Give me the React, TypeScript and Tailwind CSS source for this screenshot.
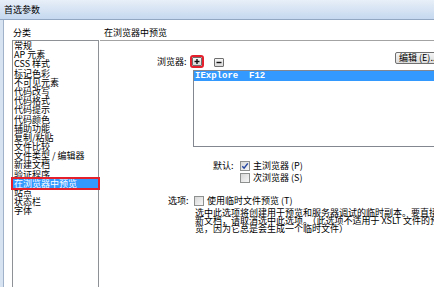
import React from "react";

const CATEGORIES = [
  "常规",
  "AP 元素",
  "CSS 样式",
  "标记色彩",
  "不可见元素",
  "代码改写",
  "代码格式",
  "代码提示",
  "代码颜色",
  "辅助功能",
  "复制/粘贴",
  "文件比较",
  "文件类型 / 编辑器",
  "新建文档",
  "验证程序",
  "在浏览器中预览",
  "站点",
  "状态栏",
  "字体"
];

const SELECTED = "在浏览器中预览";

function CheckBox({ checked }: { checked?: boolean }) {
  return (
    <span className="flex h-[10px] w-[10px] shrink-0 items-center justify-center border border-[#8e8f8f] bg-gradient-to-br from-[#d8d8d8] to-[#f7f7f7]">
      {checked && (
        <svg viewBox="0 0 8 8" className="h-[8px] w-[8px]">
          <path d="M1.3 4.3 L3.1 6.2 L6.8 1.4" stroke="#2446a0" strokeWidth="1.5" fill="none" />
        </svg>
      )}
    </span>
  );
}

function SmallButton({ sign, className }: { sign: "plus" | "minus"; className?: string }) {
  return (
    <span
      className={`flex h-[9px] w-[10px] shrink-0 items-center justify-center rounded-[1px] border border-[#6f6f6f] bg-gradient-to-b from-[#f6f6f6] to-[#d9d9d9] ${className ?? ""}`}
    >
      <svg viewBox="0 0 8 7" className="h-[7px] w-[8px]">
        <path d="M1.5 3.5 H6.5" stroke="#111" strokeWidth="1.4" />
        {sign === "plus" && <path d="M4 1 V6" stroke="#111" strokeWidth="1.4" />}
      </svg>
    </span>
  );
}

export default function App() {
  return (
    <div className="h-[287px] w-[434px] overflow-hidden bg-white font-['Noto_Sans_CJK_SC',sans-serif] text-[9px] text-black">
      <div className="h-[20px] border-b border-[#91a7c2] bg-gradient-to-b from-[#e8eff8] to-[#c5d8ef] pl-[4px] leading-[19px]">
        首选参数
      </div>

      <div className="flex h-[267px] border-l-[3px] border-[#d7e3f1]">
        <div className="w-px shrink-0 bg-[#9fb2c9]" />

        {/* category list */}
        <div className="w-[95px] shrink-0 pl-[8px]">
          <div className="ml-[1px] mt-[7px] h-[13px] leading-[12px]">分类</div>
          <div className="h-[260px] w-[87px] border border-[#8e9296] bg-white">
            {CATEGORIES.map((name) => (
              <div
                key={name}
                className={
                  name === SELECTED
                    ? "h-[9.2px] whitespace-nowrap bg-[#3399ff] pl-[1px] leading-[9.2px] text-white outline-2 outline-[#e3202c]"
                    : "h-[9.2px] whitespace-nowrap pl-[1px] leading-[9.2px]"
                }
              >
                {name}
              </div>
            ))}
          </div>
        </div>

        {/* preview settings */}
        <div className="min-w-0 flex-1">
          <div className="ml-[1px] mt-[7px] h-[14px] border-b border-[#a3a3a3] pl-[4px] leading-[12px]">在浏览器中预览</div>

          <div className="mt-[11px] flex h-[16px] items-start">
            <span className="ml-[58px] mt-[4px] w-[33px] shrink-0 whitespace-nowrap leading-[12px]">浏览器:</span>
            <SmallButton sign="plus" className="ml-[2px] mt-[5px] outline-2 outline-[#e3202c]" />
            <SmallButton sign="minus" className="ml-[12px] mt-[6px]" />
            <span className="ml-[171px] h-[12px] shrink-0 whitespace-nowrap rounded-[2px] border border-[#707070] bg-gradient-to-b from-[#f4f4f4] to-[#dcdcdc] px-[3px] leading-[10px]">
              编辑 (E)...
            </span>
          </div>

          <div className="ml-[94px] mt-[2px] h-[77px] w-[260px] border border-[#828790] bg-white">
            <div className="h-[10px] whitespace-pre bg-[#3399ff] pl-[1px] font-['Liberation_Mono',monospace] text-[9px] font-bold leading-[10px] text-white">
              {"IExplore  F12"}
            </div>
          </div>

          <div className="mt-[13px] flex h-[12px] items-center">
            <span className="ml-[114px] w-[24px] shrink-0 whitespace-nowrap">默认:</span>
            <span className="ml-[3px]">
              <CheckBox checked />
            </span>
            <span className="ml-[3px] whitespace-nowrap">主浏览器 (P)</span>
          </div>
          <div className="flex h-[12px] items-center">
            <span className="ml-[141px]">
              <CheckBox />
            </span>
            <span className="ml-[3px] whitespace-nowrap">次浏览器 (S)</span>
          </div>

          <div className="mt-[11px] flex h-[12px] items-center">
            <span className="ml-[69px] w-[21px] shrink-0 whitespace-nowrap">选项:</span>
            <span className="ml-[5px]">
              <CheckBox />
            </span>
            <span className="ml-[3px] whitespace-nowrap">使用临时文件预览 (T)</span>
          </div>

          <div className="ml-[96px] mt-[2px] whitespace-nowrap leading-[8px]">
            <div>选中此选项将创建用于预览和服务器调试的临时副本。要直接更</div>
            <div>新文档，请取消选中此选项。（此选项不适用于 XSLT 文件的预</div>
            <div>览，因为它总是会生成一个临时文件）</div>
          </div>
        </div>
      </div>
    </div>
  );
}
